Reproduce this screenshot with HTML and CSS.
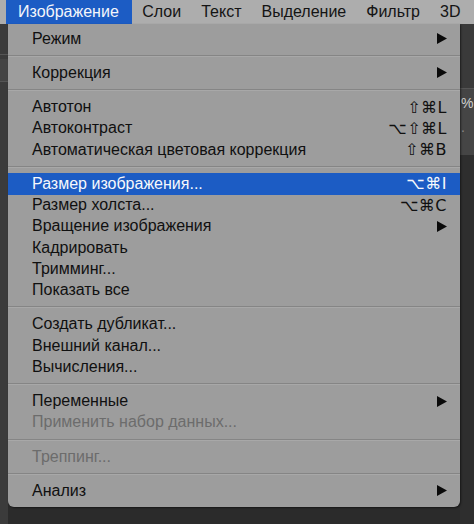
FILE: index.html
```html
<!DOCTYPE html>
<html lang="ru">
<head>
<meta charset="utf-8">
<title>Изображение</title>
<link rel="stylesheet" href="styles.css">
</head>
<body>
<div class="menubar">
  <span class="top active">Изображение</span>
  <span class="top">Слои</span>
  <span class="top">Текст</span>
  <span class="top">Выделение</span>
  <span class="top">Фильтр</span>
  <span class="top">3D</span>
</div>
<div class="workspace">
  <div class="leftpanel">
    <div class="lp-band"></div>
    <div class="lp-band lp-b2"></div>
  </div>
  <div class="menu">
    <div class="item"><span class="label">Режим</span><svg class="arrow" viewBox="0 0 10 11"><polygon points="0,0 10,5.5 0,11"/></svg></div>
    <div class="sep"></div>
    <div class="item"><span class="label">Коррекция</span><svg class="arrow" viewBox="0 0 10 11"><polygon points="0,0 10,5.5 0,11"/></svg></div>
    <div class="sep"></div>
    <div class="item"><span class="label">Автотон</span><span class="sc">⇧⌘L</span></div>
    <div class="item"><span class="label">Автоконтраст</span><span class="sc">⌥⇧⌘L</span></div>
    <div class="item"><span class="label">Автоматическая цветовая коррекция</span><span class="sc">⇧⌘B</span></div>
    <div class="sep"></div>
    <div class="item selected"><span class="label">Размер изображения...</span><span class="sc">⌥⌘I</span></div>
    <div class="item"><span class="label">Размер холста...</span><span class="sc">⌥⌘C</span></div>
    <div class="item"><span class="label">Вращение изображения</span><svg class="arrow" viewBox="0 0 10 11"><polygon points="0,0 10,5.5 0,11"/></svg></div>
    <div class="item"><span class="label">Кадрировать</span></div>
    <div class="item"><span class="label">Тримминг...</span></div>
    <div class="item"><span class="label">Показать все</span></div>
    <div class="sep"></div>
    <div class="item"><span class="label">Создать дубликат...</span></div>
    <div class="item"><span class="label">Внешний канал...</span></div>
    <div class="item"><span class="label">Вычисления...</span></div>
    <div class="sep"></div>
    <div class="item"><span class="label">Переменные</span><svg class="arrow" viewBox="0 0 10 11"><polygon points="0,0 10,5.5 0,11"/></svg></div>
    <div class="item disabled"><span class="label">Применить набор данных...</span></div>
    <div class="sep"></div>
    <div class="item disabled"><span class="label">Треппинг...</span></div>
    <div class="sep"></div>
    <div class="item"><span class="label">Анализ</span><svg class="arrow" viewBox="0 0 10 11"><polygon points="0,0 10,5.5 0,11"/></svg></div>
  </div>
  <div class="rightpanel">
    <div class="rp-top"></div>
    <div class="rp-mid">
      <div class="rp-text">%</div>
      <div class="rp-text dim">.</div>
    </div>
  </div>
</div>
</body>
</html>
```

FILE: styles.css
```css
html, body {
  margin: 0;
  padding: 0;
}
body {
  width: 474px;
  height: 524px;
  overflow: hidden;
  background: #2b2b2b;
  font-family: "Liberation Sans", Arial, "DejaVu Sans", sans-serif;
  color: #101010;
}
.menubar {
  height: 24px;
  background: #adadad;
  display: flex;
  align-items: stretch;
  padding-left: 6px;
  font-size: 16px;
  white-space: nowrap;
}
.top {
  display: flex;
  align-items: center;
  padding: 0 9.5px 0 10.5px;
  color: #141414;
}
.active {
  background: #1c5cc4;
  color: #f4f6fb;
  padding: 0 13px 0 12px;
}
.workspace {
  display: flex;
  align-items: flex-start;
}
.leftpanel {
  width: 8px;
  height: 500px;
  background: #3b3b3b;
  display: flex;
  flex-direction: column;
}
.lp-band {
  height: 28px;
  margin-top: 2px;
  border-bottom: 1px solid #555;
}
.lp-b2 {
  height: 22px;
  margin-top: 4px;
  background: #444;
}
.menu {
  width: 452px;
  background: #9d9d9d;
  padding: 4px 0 5px;
  border-radius: 0 0 6px 6px;
  box-shadow: 1px 1px 2px rgba(0,0,0,0.5);
  font-size: 16px;
  position: relative;
  z-index: 1;
}
.item {
  height: 21.25px;
  display: flex;
  align-items: center;
  justify-content: space-between;
  padding: 0 13px 0 24px;
  white-space: nowrap;
}
.selected {
  background: #1c5cc4;
  color: #f6f8fc;
}
.disabled {
  color: #6c6c6c;
}
.sc {
  font-family: "DejaVu Sans", "Liberation Sans", sans-serif;
  font-size: 16px;
  letter-spacing: 0.5px;
}
.arrow {
  width: 10px;
  height: 11px;
  fill: #0a0a0a;
}
.sep {
  height: 13px;
  display: flex;
  align-items: center;
}
.sep::before {
  content: "";
  display: block;
  width: 100%;
  height: 1px;
  background: #858585;
  border-bottom: 1px solid #a8a8a8;
}
.rightpanel {
  flex: 1;
  height: 500px;
  background: #2e2e2e;
  overflow: hidden;
}
.rp-top {
  height: 64px;
  background: #3a3a3a;
  border-bottom: 1px solid #555;
}
.rp-mid {
  height: 60px;
  background: #454545;
  padding-top: 6px;
}
.rp-text {
  font-size: 14px;
  color: #d0d0d0;
  padding-left: 1px;
  height: 24px;
}
.rp-text.dim {
  color: #8a8a8a;
}
```
